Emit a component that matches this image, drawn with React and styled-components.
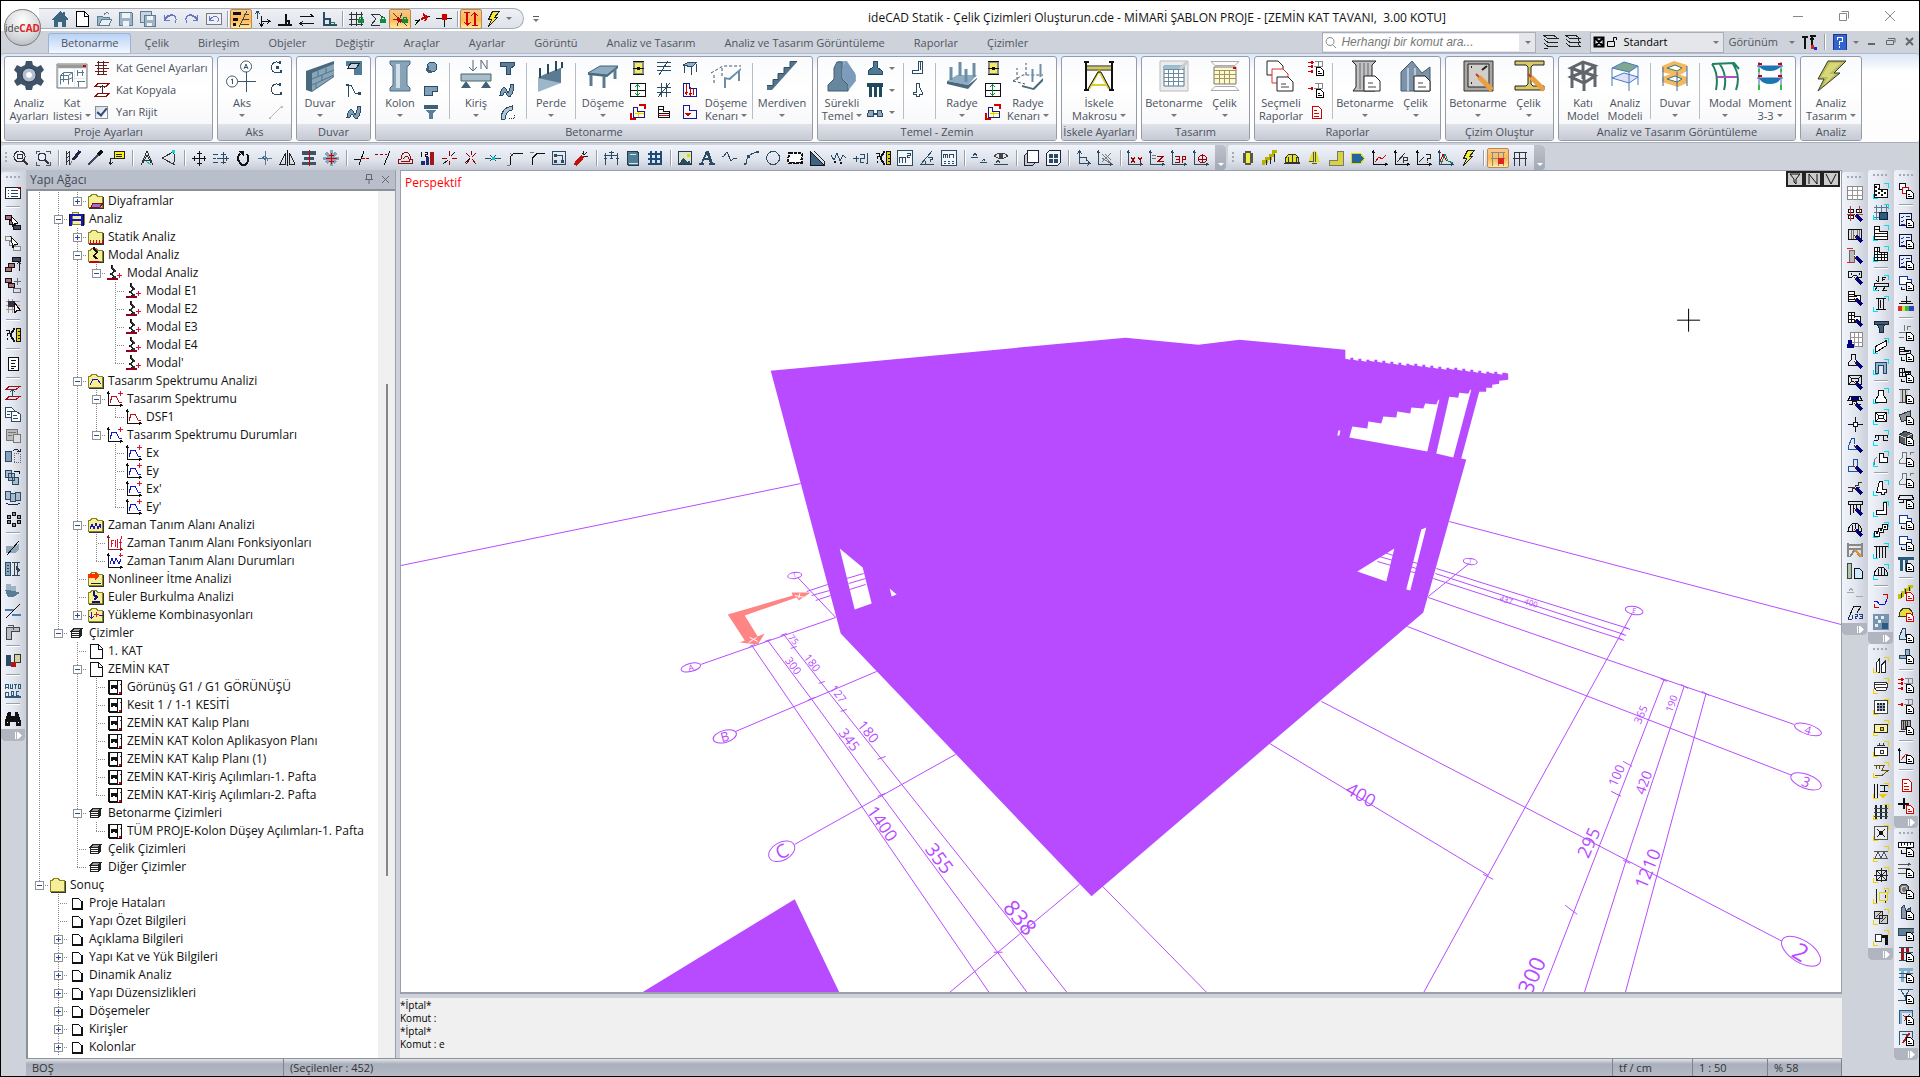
import React, { useState } from "react";
import styled, { createGlobalStyle, css } from "styled-components";

const GlobalStyle = createGlobalStyle`
  * { box-sizing: border-box; }
  body { margin: 0; background: #ced2db; overflow: hidden; }
  button, input, select { font: inherit; color: inherit; }
  button { border: 0; background: none; padding: 0; }
  ul { list-style: none; margin: 0; padding: 0; }
`;

/* ---------- icon drawings ---------- */

const NAVY = "#2b4a63";
const RED = "#d40000";
const GREEN = "#118a3a";
const PURPLE = "#b84bff";

const s = (d, c = "#111", w = 1) => ({ d, stroke: c, strokeWidth: w, fill: "none" });
const f = (d, c, st = "none") => ({ d, fill: c, stroke: st });

const doc = (c = "#000") => [f("M8.500 7.500h4l3 3v5h-7z", "#fff", c), s("M10 11.500h2M10 13.500h4", c)];
const brush = [s("M9 9l6 6", "#00007b", 3), s("M7 8l3 3", "#7b1010", 1), s("M7 7l2 2", "#fff", 1)];
const cyan = s("M11 .5h4.500v4M.5 11v4.500h4", "#00e0f0");
const gold = s("M11 .5h4.500v4M.5 11v4.500h4", "#f0d000", 1);
const axes = (c = "#111") => s("M1.500 1v13.500H15M0 3l1.500-2L3 3M13 13l2 1.500L13 16", c);
const folder = [f("M.5 3.500h2l1-2h5l1 2h5v11H.5z", "#f6ef9a", "#8a8420"), s("M15.500 4v11.500H1", "#333")];
const lock = [f("M10 8h6v4h-6z", GREEN), s("M11.500 8V6.500h3V8", GREEN)];
const gridD = "M3.500 1v14M8.500 1v14M13.500 1v14M1 3.500h14M1 8.500h14M1 13.500h14";
const slabD = "M1.500 1.500h5v5h8v8h-13z";

const icons = {
  home: [f("M0 8L8 0l3 3V1h2v4l3 3v1h-2v7h-4v-5H6v5H2V9H0z", "#3c6580")],
  page: [f("M2.500 .5h8l4 4v11h-12z", "#fff", "#000"), s("M10.500 1v4h4", "#000")],
  open: [f("M1 5h5l1 1h6v8H1z", "#9db4c4", "#5d7c92"), f("M3 14l3-6h10l-3 6z", "#e9eff4", "#5d7c92"), s("M8 4q2-4 5-1", "#5d7c92")],
  save: [f("M1.500 1.500h12l1 1v12h-13z", "#9fb3c4", "#5d7c92"), f("M4 2h8v5H4zM5 10h6v5H5z", "#edf3f7")],
  saveAll: [f("M.5 .5h11v11H.5z", "#c7d3dd", "#5d7c92"), f("M4.500 4.500h11v11h-11z", "#9fb3c4", "#5d7c92"), f("M7 5h6v4H7zM7 12h5v3H7z", "#edf3f7")],
  undo: [s("M2.500 4v5h5M3 8q3-5 8-4q5 3 2 8", "#6878c0", 1), s("M3 9q3-5 8-4", "#6878c0", 1)],
  redo: [s("M13.500 4v5h-5M13 8q-3-5-8-4q-5 3-2 8", "#6878c0", 1), s("M13 9q-3-5-8-4", "#6878c0", 1)],
  undoBox: [f("M.5 2.500h15v11H.5z", "#eef0f8", "#7a7a7a"), s("M3.500 5v4h4M4 9q3-5 7-3q3 2 0 5", "#6878c0", 1)],
  brick: [f("M0 1h8v3H0zM0 7h5v3H0zM0 12h3v3H0z", "#111"), s("M14 0L6 16M11 3.500h5M9 8.500h7M8 13.500h8", "#444")],
  move2: [s("M2.500 0v8M0 3l2.500-3L5 3", NAVY), s("M6.500 5v9M6 10.500h9M12 8l3 2.500-3 2M4 12l2.500 3L9 12", "#111")],
  perp: [s("M1 13.500h14M8.500 3v10M8 9.500h4v4", "#111", 2)],
  parallel: [s("M1 5.500h14M11 3l4 2.500M1 12.500h14M4 10l-3 2.500L4 15", "#111")],
  corner: [s("M2.500 1v13h13M2.500 8h6v6", NAVY, 2), s("M10 11h3v3", GREEN)],
  gridLock: [s(gridD, "#333"), ...lock],
  polyLock: [s("M1 3h7l5 3M1 14l5-6-5-5M1 14h9", "#333"), ...lock],
  starLock: [s("M1 2l14 13M1 8.500h13M5 15l5-13", "#444"), f("M5 6l3 2 1 4-4-2z", RED), ...lock],
  cutR: [s("M1 9.500h5M10 5.500h6M1 14l5-6", "#111", 1), s("M7 8l6-2M9 3l4 3-2 4", RED, 2)],
  tee: [s("M0 7.500h16M8.500 7v9", "#111"), f("M6 3h5v6H6z", RED)],
  updn: [s("M4.500 2v12M1 11l3.500 3L8 11M11.500 14V2M8 5l3.500-3L15 5M1 1.500h6M9 14.500h6", RED, 1), s("M3.500 2v12M12.500 2v12", RED)],
  bolt: [f("M7.500 .5h7l-5 6h3l-9 9 3-7h-3z", "#f4ee3a", "#222")],
  zoomBox: [s("M10.500 10.500L15 15", "#333", 2), f("M6.500 1a5.500 5.500 0 1 0 .1 0z", "#eef", "#333"), s("M4 4.500h5v4H4z", "#333")],
  zoomSel: [s("M1 4V1h4M11 1h4v3M15 12v3h-4M5 15H1v-3", "#555"), f("M7 3a4 4 0 1 0 .1 0z", "#e8effa", "#334"), s("M10 10l4 4", "#333", 2)],
  hatchPen: [s("M1.500 1v14M4.500 1v14M2 4l3-3M2 8l3-3M2 12l3-3", "#333"), s("M15 1L8 10", "#224", 3), s("M7 11l-2 4", "#777", 1)],
  pipette: [s("M12 4L3 13l-2 2", "#446", 2), s("M15 1l-4 4", "#111", 4)],
  note: [f("M5.500 1.500h10v7h-10z", "#ffee22", "#222"), s("M7 4.500h6M7 6.500h6M5 8.500H1.500V14M0 12l1.500 2L4 12", "#222")],
  compassA: [s("M2 15L8 1l6 14M4 10h8M8 5l4 8M8 5l-4 8", "#333"), s("M7 11l5 4", "#0cc")],
  arcCut: [s("M14 1L1 8l13 7M12 2q4 6 0 12", "#333"), f("M11 0h3v3h-3z", "#0dd")],
  move: [s("M8.500 1v14M1 8.500h14M6 3.500h5M6 13.500h5M3.500 6v5M13.500 6v5M8 2h1M8 15h1", "#111"), s("M8 2v13M2 8h13", "#111")],
  moveCopy: [s("M10.500 2v12M4 8.500h12M8 4.500h5M8 12.500h5M13.500 6v5", NAVY), s("M0 4.500h5M0 8.500h3M0 12.500h5", NAVY, 1)],
  rotate: [s("M5 4q-4 4 0 9t7 0 0-9", "#111", 2), f("M3 1h6v6z", "#111")],
  axisStar: [s("M8.500 1v14M1 8.500h14M6 6q5 0 5 5", "#5a7890"), f("M4 7l4 4 1-3z", "#369")],
  mirror: [s("M8.500 0v16", "#111"), s("M6.500 3v11H1zM10.500 3v11H16z", "#222")],
  alignC: [f("M1 1h14v4H1zM3 7h10v3H3zM1 12h14v3H1z", "#3b5468"), s("M8.500 0v16", RED, 1)],
  starMove: [s("M3 3l10 10M13 3L3 13", "#8aa2b5", 3), s("M8 0v16M0 8h16", "#8aa2b5", 3), s("M8.500 3v11M3 8.500h11M6 5.500h5M6 11.500h5", RED)],
  trimA: [s("M1 9.500h6M11 1L6 15", "#111"), s("M9 8.500h3M13 8.500h3", "#900", 1)],
  trimB: [s("M15 1L9 15", "#111"), s("M0 4.500h3M5 4.500h3M10 4.500h2", "#900", 1)],
  offset: [s("M1 13.500V9.500h3q0-7 5-7t4 7h2v4zM4 11.500h8V9q-2-5-6 0", "#8a1010")],
  steps12: [f("M2 11h4v4H2zM7 7h3v8H7z", "#1a2c7a"), f("M11 2h4v13h-4z", "#a01818"), s("M2.500 2v5M6 2.500h2v2H6v2h3", "#111")],
  breakA: [s("M8.500 1v5M8.500 11v4M1 8.500h5M11 8.500h5", "#900", 1), s("M2 14l5-4M10 6l4-4", "#111")],
  breakB: [s("M3 3l4 4M13 3L9 7M3 14l4-5M13 14L9 9M8.500 1v4", "#800"), s("M2 13l5-5", "#111")],
  extend: [s("M0 8.500h6M10 8.500h6M5 5l6 6M5 11l6-6", NAVY), f("M7 7h3v3H7z", "#0cc")],
  filletA: [s("M3.500 15V9q0-6 6-6H16", "#111"), s("M0 15h3M3 3l3 3", "#777")],
  filletB: [s("M3.500 15V8l5-5H16", "#111"), s("M1 2h4", "#777")],
  nodes: [s("M1.500 1.500h13v13h-13zM4 5.500h7v6", NAVY), f("M3 4h3v3H3zM10 10h3v3h-3zM3 10h3v3H3z", NAVY)],
  wand: [s("M2 15L10 6", "#c01010", 4), s("M10 1v4M15 6h-4M14 2l-3 3M9 3l2 2", "#222")],
  dimRow: [s("M1 5.500h14M2.500 3v12M8.500 1v8M14.500 3v12M1 8.500h3M7 8.500h3M13 8.500h3M6 2.500h5", NAVY)],
  book: [f("M2.500 1.500h9l2 1v13h-9l-2-1z", "#4f7f96", "#223c4d"), s("M5 4h6M4 13h9", "#d8e6ee")],
  grid: [s(gridD, "#1c4a7a", 2)],
  image: [f("M1.500 1.500h13v13h-13z", "#dfe6d0", "#223c4d"), f("M2 14l4-6 4 4 2-2 2 4z", NAVY), f("M10 4h3v3h-3z", "#dd0")],
  letterA: [f("M7 1h3l4 12h2v2h-6v-2h1l-1-3H5l-1 3h1v2H0v-2h2zM6 8h3L8 4z", NAVY)],
  poly: [s("M1 6h2l3-4 4 9 3-3h3", NAVY)],
  arc: [s("M3 14q0-10 11-12", NAVY), f("M1 13h2v2H1zM13 1h3v2h-3zM4 5h3v3H4z", NAVY)],
  circle: [s("M8 1.500a6.500 6.500 0 1 0 .1 0z", NAVY)],
  cloud: [f("M3 3h10q3 0 2 3t0 7q-2 1-4 0t-4 0-5 0q-2-1-1-4t1-6z", "#fff"), { ...s("M3 3h10q3 0 2 3t0 7q-2 1-4 0t-4 0-5 0q-2-1-1-4t1-6z", "#111", 2), strokeDasharray: "3 1" }],
  hatch: [f("M1 1l14 14H1z", "#3c6580", "#112"), s("M5 1l10 10v4", "#222")],
  spline: [s("M0 5l3 5 3-7 3 8 3-6 3 3", NAVY), f("M3 11h2v2H3zM9 12h2v2H9z", "#111")],
  plus21: [s("M0 8.500h6M3.500 6v6M7 4.500h4v4H7v4h4M14.500 3v10h-2", NAVY, 1)],
  qArrow: [s("M1 3.500h3v3H2.500V9M2.500 11v2", "#111"), s("M10 1L6 8l4 7M9 1L5 8l4 7", "#111"), f("M11.500 1.500h4v13h-4z", "#e8d000", "#111"), s("M13 4.500h2M13 8.500h2M13 11.500h2", "#111")],
  m2: [f("M.5 .5h15v15H.5z", "#f4f6fa", NAVY), s("M2.500 13V7.500h6V13M5.500 8v5M10 3.500h3v2h-3v2h3", NAVY)],
  angleQ: [s("M1 14.500h14M2 14L13 1M9 7.500h4v2h-2v2M7 14q0-4-3-4", NAVY)],
  mm2: [f("M.5 .5h15v15H.5z", "#f4f6fa", NAVY), s("M2.500 8V4.500h4V8M4.500 5v3M8.500 8V4.500h4V8M3 11.500h2M7 11.500h2M11 11.500h2M3 13.500h2M7 13.500h2M11 13.500h2", NAVY)],
  levels: [s("M0 7.500h7M9 12.500h7M2 6l2-3 2 3M11 11l2-2 1 2", NAVY)],
  eye: [s("M1 6q7-6 14 0q-7 5-14 0M1 14.500h14", "#444"), f("M6 4h4v4H6z", "#444"), s("M3 13l2-3 2 3", NAVY)],
  sheetA: [f("M4.500 .5h11v12h-11z", "#fff", "#223"), f("M1.500 5.500l3-3v10h8l-3 3h-8z", "#c5ccd5", "#223")],
  sheetB: [f("M1.500 3.500l3-3h11v12l-3 3h-11z", "#f2f5f9", "#223"), f("M4 4h4v4H4zM9 4h4v4H9zM4 9h4v4H4zM9 9h4v4H9z", NAVY)],
  ucs: [s("M4.500 13V1M2 4l2.500-3L7 4M4 13.500h11M12 10l3 3.500-3 2M4 7.500h7v3", NAVY)],
  ucsBrush: [axes(NAVY), s("M5 12l9-9M5 8l8 5M8 4l6 6M5 4l10 10", "#777")],
  xy: [axes(NAVY), s("M4 7l4 6M8 7l-4 6M11 7l2 3 2-3M13 10v3", "#900", 1)],
  zz: [axes(NAVY), s("M8 6.500h6l-5 5h6", "#900", 1), s("M3 5.500h4M3 8.500h4", "#777")],
  threeP: [axes(NAVY), s("M4 6.500h4v6H4M5 9.500h3M11.500 13V6.500h3v3h-3", "#900", 1)],
  target: [axes(NAVY), s("M9.500 5a4 4 0 1 0 .1 0M9.500 4v9M5 9.500h9", "#900", 1)],
  col3d: [f("M3 3h2V1h6v2h2v10h-2v2H5v-2H3z", "#55594a"), f("M6 3h4v10H6z", "#f2ee40")],
  stairY: [s("M1 15v-4h3V8h4V5h3V1h4", "#b8b000", 3), s("M4.500 15v-5M8.500 14V7M12.500 12V4", "#222")],
  domeY: [f("M1 12q0-8 7-8t7 8z", "#e5e030", "#333"), s("M4.500 12V7M8.500 12V4M12.500 12V7M0 13.500h16", "#333")],
  coneY: [f("M7 1h3l4 11h-5v3H7v-3H2z", "#e5e030"), s("M7.500 2v9H3M9.500 2v10M6 13.500h5", "#555")],
  wallY: [f("M9 1h6v14H1v-5h8z", "#d8d338", "#777")],
  tagY: [f("M1.500 3.500h9l4 5-4 5h-9z", "#24649c", "#e5d800")],
  curveR: [axes(), s("M3 12l4-5 3 2 4-4", "#c00")],
  curveP: [axes(), s("M3 12l8-9M9.500 13V7.500h4v3H9", "#333")],
  curveQ: [axes(), s("M3 12l5-5M10 4.500h4v4h-2.500v2M11.500 12v1", "#222")],
  peaks: [axes("#246"), s("M2 12l3-8 3 6 6 3", "#c00"), s("M3 14l4-10 3 7 5 2", "#186")],
  frameR: [s("M1 2.500h14M1 8.500h14M2.500 2v14M8.500 2v14M13.500 2v14", "#888"), f("M8 8h6v6H8z", "#d22")],
  frame: [s("M2 2.500h13M1 8.500h14M2.500 2v14M7.500 2v14M13.500 2v14", "#334")],
  layers: [s("M1 1.500h10l4 3H5zM1 5l4 3.500h10M1 9l4 3.500h10M1 15l4-1", "#222")],
  layers2: [s("M1 1.500h10l4 3H5zM1 5l4 3.500h10l-2-3M1 9l4 3.500h10l-2-3", "#222")],
  wrench: [s("M4 3v12M11 3v12", "#111", 2), s("M1 3h6M9 2h6M9 5h4", "#111", 2), f("M10 11h3v4h-3z", "#d22"), f("M13 13h3v3h-3z", "#22d")],
  help: [f("M2 0h13v16H2z", "#3264d0", "#1c3a88"), s("M6 5.500V3.500h5v4H8.500v3M8.500 12v2", "#fff", 1)],
  // left and right docks
  props: [f("M.5 2.500h15v11H.5z", "#fff", "#222"), s("M3 5.500h1M3 8.500h1M3 11.500h1M6 5.500h7M6 8.500h7M6 11.500h7", "#246"), f("M13 2h2v2h-2z", RED)],
  selA: [f("M.5 1.500h6v4h-6zM4.500 6.500h6v4h-6z", "#b07078", "#111"), f("M8.500 11.500h7v4h-7z", "#446", "#111"), f("M6 2l7 7-4 1-1 3z", "#fff", "#111")],
  selB: [f("M.5 1.500h6v4h-6zM4.500 6.500h6v4h-6zM8.500 11.500h7v4h-7z", "#eee", "#888"), f("M6 2l7 7-4 1-1 3z", "#fff", "#111")],
  selC: [f("M7.500 1.500h8v4h-8z", "#446", "#111"), f("M.5 11.500h6v4h-6zM3.500 7.500h6v4h-6z", "#b07078", "#111"), s("M14.500 6v9M12 8l2.500-2L16 8", "#222")],
  selD: [f("M.5 1.500h6v4h-6zM3.500 6.500h6v4h-6z", "#b07078", "#111"), s("M12.500 1v7M9 4.500h7M8 11.500h7v4H8z", "#667")],
  selE: [s("M1 3.500h14M1 7.500h14M1 11.500h14M3.500 1v14M7.500 1v14", "#b09090"), f("M3 3h7v6H3z", "#334"), f("M9 4l6 8h-3l-2 3z", "#fff", "#111")],
  list: [f("M3.500 1.500h10v13h-10z", "#fff", "#111"), s("M6 4.500h5M6 7.500h4M6 10.500h5M6 12.500h3", "#111")],
  heightR: [s("M4 1.500h11l-4 3H1zM4 11.500h11l-4 3H1z", "#a01010"), s("M7.500 5v7M5 7l2.500-2L10 7", NAVY)],
  copy: [f("M.5 1.500h6l3 3v7h-9z", "#fff", NAVY), f("M6.500 5.500h5l4 3v7h-9z", "#fff", NAVY), s("M8 9.500h4M8 12.500h5M2 5.500h4M2 8.500h3", NAVY)],
  paste: [f("M1.500 2.500h11v11h-11z", "#bbb", "#777"), f("M8.500 7.500h7v8h-7z", "#ddd", "#777"), s("M3 5.500h8M3 8.500h4", "#777")],
  copyA: [f("M.5 3.500h6v10h-6z", "#8aa0bc", NAVY), { ...s("M9 5.500h6v9H9z", "#667"), strokeDasharray: "1 1" }, s("M8 3q3-3 6 0M12 3.500h3V1", "#223")],
  copyB: [f("M.5 1.500h6v7h-6zM3.500 4.500h6v7h-6zM7.500 8.500h6v7h-6z", "#a9bace", NAVY), s("M9 2h5v3", "#111")],
  copyC: [f("M.5 1.500h5v8h-5zM5.500 3.500h5v8h-5zM10.500 2.500h5v8h-5z", "#a9bace", NAVY), s("M1 13q7 4 14 0", "#224")],
  ringC: [f("M7 1h3v3H7zM7 12h3v3H7zM2 4h3v3H2zM12 4h3v3h-3zM2 9h3v3H2zM12 9h3v3h-3z", "#889", "#111")],
  beamCut: [f("M1 6h10l3-3v6l-3 4H1z", "#8ea6b8"), s("M2 15L14 1", "#111")],
  colBar: [f("M.5 1.500h5v13h-5z", "#88a6bb", NAVY), s("M2 4.500h2M2 7.500h2M2 10.500h2M7 1.500h8M7 14.500h8M9.500 2v12M12.500 2v12", "#345"), f("M11 5l4 4-3 3z", "#345")],
  plane: [f("M0 8h8l7 3-7 4H3z", "#5a7d94"), f("M1 2h5v6H1zM6 4h5v5H6z", "#9db4c4")],
  beamLn: [s("M0 6.500h9M7 11.500h9", "#4d7fa8", 2), s("M1 15L15 1", "#111")],
  bracket: [f("M1.500 3.500h13v4h-8v8h-5z", "#b9bdc4", "#444"), s("M3 1h5v5", "#555")],
  render: [f("M1 2h5v11H1z", "#2b4a63"), f("M9 1h6v8H9z", "#d9d0a0", "#333"), f("M6 9h5v5H6z", "#b01818")],
  autoAbc: [s("M.5 7V2.500h3V7M1 5.500h2M5.500 2v4.500h2V2M9 2.500h3M10.500 2v5M13.500 2.500h2v4h-2zM.5 14v-3.500h3V14M6 9.500h2.500v4H6zM14 9.500h-3v4h3", "#2b5a7a"), s("M0 15h16", "#2b5a7a", 2)],
  binoc: [f("M3 1h3v4h4V1h3l3 9v5h-5v-4H5v4H0v-5z", "#111"), s("M2 11.500h1M13 11.500h1", "#fff")],
  table: [f("M.5 1.500h15v13H.5z", "#fff", "#888"), s("M1 5.500h15M1 10.500h15M5.500 2v13M10.500 2v13", "#999")],
  nodeB: [f("M1.500 3.500h5v3h-5zM9.500 3.500h5v3h-5zM1.500 9.500h5v3h-5z", "#fff", "#111"), s("M3.500 0v15M12.500 0v6M0 8.500h16", "#c33"), ...brush],
  panelB: [f("M1.500 2.500h13v10h-13z", "#ddd", "#111"), s("M4.500 3v9M6.500 3v9M10.500 3v9M12.500 3v9", "#777"), ...brush],
  colB: [f("M2 2h5v12H2z", "#bbb", "#666"), s("M0 .5h6M0 14.500h6", "#d22"), ...brush],
  shoulderB: [s("M1.500 2.500h13v6h-3l-2-2h-3l-2 2h-3zM4.500 4v2M12.500 4v2", "#111"), ...brush],
  slabB: [f("M1.500 1.500h6v4h6v6h-12z", "#fff", "#111"), s("M2 4.500h6M2 6.500h8M2 9.500h8", "#111"), ...brush],
  meshB: [f("M1.500 1.500h6v4h6v6h-12z", "#fff", "#111"), s("M4.500 2v9M7.500 4v7M2 4.500h6M2 8.500h8", "#111"), ...brush],
  tableF: [f("M3.500 .5h12v14h-12z", "#fff", "#888"), s("M4 5.500h12M4 10.500h12M7.500 1v14M11.500 1v14", "#999"), f("M1 8h4v4h2v4H0v-4h1z", "#000080")],
  footB: [s("M4.500 1.500h4v5l3 3v3h-10v-3l3-3z", "#111"), ...brush],
  padB: [s("M1.500 1.500h13v9h-13zM4.500 4.500h7v3h-7zM1 1l3 3M15 1l-3 3M1 11l3-3", "#111"), ...brush],
  capB: [s("M1.500 9.500h4v-3h4v3h4M3 1.500h10l2 4H1z", "#111"), f("M4 2h8v3H4z", "#000080"), ...brush],
  cross: [s("M8.500 1v15M1 8.500h15", "#111", 1), f("M6.500 6.500h4v4h-4z", "#fff", "#111")],
  wedgeB: [s("M4.500 1.500h3v8h4v3h-10v-3z", "#2050a0"), ...brush],
  boxB: [s("M6.500 1.500h4v12h-9v-5h5z", "#2050a0"), ...brush],
  stairB: [s("M1 12.500h4V9.500h3V6.500h3V3.500h4M1 8.500h12", "#333"), ...brush],
  pilesB: [s("M1 1.500h14v3H1zM3.500 5v10M6.500 5v8M9.500 5v4M13.500 5v8", "#111"), ...brush],
  domeB: [s("M1 10.500q1-8 7-8t7 8zM5.500 10V4M8.500 10V2M11.500 10V4", "#111"), ...brush],
  trussP: [s("M1 1v14M15 1v14M1 3h14M1 7h14M3 15L8 7l5 8", "#888", 2), s("M8 8l7 7", "#e09030", 2)],
  sheetG: [f("M.5 .5h4v15h-4z", "#a9c9a9", "#444"), f("M7.500 5.500h5l3 3v7h-8z", "#cfeaff", "#111")],
  levelG: [s("M0 8.500h7M9 12.500h7M2 7l2-3 2 3", "#aaa")],
  n123: [s("M1 14L7 1h7l-4 7", "#111"), s("M1 14.500h4M5.500 10v4M8 9.500h2v2H8v2h2M12 9.500h3v4h-3M13 11.500h2", "#223a8a")],
  checkC: [f(slabD, "#fff", "#111"), f("M2 3h2v2H2zM5 5h2v2H5zM2 7h2v2H2zM5 9h2v2H5zM8 7h2v2H8zM11 9h2v2h-2zM2 11h2v2H2zM8 11h2v2H8z", "#111"), cyan],
  gridCalc: [s(gridD, "#5a7a94"), f("M6 8h8v7H6z", "#2b5a84", "#123"), cyan],
  linesC: [f(slabD, "#fff", "#111"), s("M2 4.500h5M2 8.500h12M2 11.500h12", "#111"), cyan],
  meshC: [f(slabD, "#fff", "#111"), s("M4.500 2v12M8.500 7v8M11.500 7v8M2 5.500h5M2 8.500h12M2 11.500h12", "#111"), cyan],
  beamC: [s("M1 8.500h14v3H1zM4 12l-2 3h4M12 12l-2 3h4M5.500 1v6M3 5l2.500 2M9.500 6V2.500h3M9 4.500h3", "#111"), cyan],
  columnC: [s("M3 2.500h10M3 13.500h10M5.500 3v10M10.500 3v10M7.500 4v8", "#111"), cyan],
  funnelC: [f("M1 4h14v3H1zM4 7h8l-2 4v4H6v-4z", "#3f607a", "#223")],
  tiltC: [f("M2.500 8.500l11-6v5l-11 7z", "#fff", "#111"), cyan],
  portalC: [f("M2.500 3.500h11v11h-3v-8h-5v8h-3z", "#8fb4d0", "#246"), cyan],
  footC: [f("M5.500 2.500h5v5l3 4v3h-11v-3l3-4z", "#fff", "#111"), cyan],
  padC: [f("M2.500 3.500h11v9h-11z", "#fff", "#111"), s("M5.500 6.500h5v3h-5zM3 4l2 2M13 4l-2 2M3 12l2-2M13 12l-2-2", "#111"), cyan],
  capC: [s("M1 10.500h4l1-5h4l1 5h4M2 5.500h12M2 5v3M14 5v3", "#111"), cyan],
  cornC: [s("M1 13.500V9l3-3", "#777"), f("M6.500 2.500h4v4h4v5h-8z", "#fff", "#111"), cyan],
  wedgeC: [f("M6.500 1.500h3v8h4v3h-2v2h-3v-2h-5z", "#fff", "#111"), cyan],
  wallC: [f("M10.500 1.500h3v12h-10v-4h7z", "#fff", "#111"), cyan],
  stepsC: [f("M1.500 9.500h4v-3h4v-4h5v5h-4v3h-4v4h-5z", "#fff", "#111"), f("M3 10h2v2H3zM7 7h2v2H7zM11 4h2v2h-2z", "#111"), cyan],
  pilesC: [s("M1 3.500h14M3.500 3v12M6.500 3v12M9.500 3v12M12.500 3v12", "#111", 1), cyan],
  domeC: [s("M1 11.500q1-8 7-8t7 8zM5.500 11V5M8.500 11V3M11.500 11V5", "#111"), cyan],
  redPoly: [s("M1 8h3l2 3h6l2-5", "#1010d0"), s("M10 1.500h4.500v4M1.500 11v3.500h4", RED)],
  tileC: [f("M0 0h16v16H0z", "#7893ad"), f("M2 2h3v3H2zM8 2h3v3H8zM5 6h3v3H5zM2 10h3v3H2z", "#e5edf3"), f("M9 9h6v6H9z", "#2b5a84")],
  multiDoc: [f("M1.500 .5h6v6h-6z", "#fff", "#111"), f("M4.500 4.500h6v6h-6z", "#fff", "#d00"), ...doc()],
  checkDoc: [f("M1.500 1.500h12v12h-12z", "#e6ecfa", "#113"), s("M3 5l1 1 2-2M3 9l1 1 2-2M8 4.500h4M8 7.500h3M3 12.500h4", "#13a"), ...doc()],
  blueDoc: [f("M1.500 1.500h8v3h4v5h-12z", "#fff", "#113a9a"), s("M3.500 12v2.500h3", "#111"), ...doc()],
  rainbow: [s("M8.500 0v7M1 7.500h14M3 5.500h10", "#111"), f("M0 10h4v5H0z", "#c33"), f("M4 10h3v5H4z", "#dd3"), f("M7 10h4v5H7z", "#3b4"), f("M11 10h5v5h-5z", "#34b")],
  beamDoc: [s("M1 7.500h9M6.500 0v6M9.500 5V1.500h3M1 12.500h5", "#777"), ...doc()],
  linesDoc: [s("M1.500 1.500h5v3h6v4h-11zM2 3.500h5M2 5.500h9M3.500 11v3.500h3", "#111"), ...doc()],
  meshDoc: [s("M1.500 1.500h5v3h6v5h-11zM4.500 2v7M7.500 5v4M10.500 5v3M2 5.500h10M3.500 12v2.500h3", "#111"), ...doc()],
  colDoc: [f("M2 1h8v13H2z", "#ccc"), s("M1 1.500h11M1 14.500h7M4.500 2v12M7.500 2v12", "#444"), ...doc()],
  tubeDoc: [f("M1 6l11-4v7l-8 4z", "#8d949b", "#333"), ...doc()],
  boxDoc: [f("M1 5l6-4 7 3v7l-7 4-6-3z", "#555c60", "#222"), s("M1 5l6 3 7-4M7 8v6", "#ccc"), ...doc()],
  footDoc: [s("M4.500 1.500h4v5l3 3v3h-10v-3l3-3zM12.500 4V1.500h3", "#777"), ...doc()],
  capDoc: [s("M1 9.500h4l1-3h4l1 3M2 2.500h12l2 4H0z", "#111"), ...doc()],
  pilesDoc: [f("M0 1h16v3H0zM2 4h3v11H2zM7 4h3v11H7z", "#2b5a78"), ...doc()],
  stairDocR: [s("M1 14v-4h3V7h3V4h4V1h4", "#c8c000", 3), s("M3.500 13V8M7.500 9V4M11.500 6V2", "#222"), ...doc("#d00")],
  domeDocR: [f("M1 10q1-8 7-8t7 8z", "#e5e030", "#333"), ...doc("#d00")],
  wedgeDoc: [f("M4.500 1.500h3v8h4v3h-10v-3z", "#cfe0ee", NAVY), ...doc()],
  wallDoc: [f("M7.500 1.500h4v9h-10v-3h6z", "#8fb4d0", NAVY), ...doc()],
  redDocA: [s("M6.500 1.500h8v5M6 6.500h8M10.500 1v6", "#888"), s("M0 2.500h5M0 6.500h5M0 11.500h5M3 1l2 1.500L3 4", RED, 1), f("M3 1h2v3H3zM3 5h2v3H3zM3 10h2v3H3z", RED), ...doc()],
  redDocB: [s("M6.500 1.500h8v5M6 6.500h8M10.500 1v6", "#888"), s("M0 6.500h5", RED, 1), f("M3 5h2v3H3z", RED), ...doc()],
  barsDoc: [f("M3.500 1.500h9v9h-9z", "#aaa", "#333"), s("M5.500 2v8M7.500 2v8M9.500 2v8M1 12.500h6", "#333"), ...doc()],
  axesDoc: [axes(), s("M3 12l5-6 3 2", "#c33"), ...doc()],
  redDoc: [f("M4.500 2.500h6l3 3v9h-9z", "#fff", RED), s("M6 6.500h3M6 9.500h5M6 12.500h5", RED)],
  crossDoc: [s("M5.500 0v11M0 5.500h11", "#111", 2), ...doc("#d00")],
  rulerDoc: [f("M.5 1.500h15v5H.5z", "#fff", "#111"), s("M3.500 2v3M6.500 2v2M9.500 2v3M12.500 2v2M3.500 9v3.500h4", "#111"), ...doc()],
  arrowsDoc: [s("M0 2.500h12M10 1l2 1.500L10 4M0 6.500h12M0 11.500h8", "#555"), ...doc()],
  discDoc: [f("M6 1a5 5 0 1 0 .1 0z", "#777", "#333"), s("M6 3.500a3 3 0 1 0 .1 0", "#ccc"), ...doc()],
  bladeDoc: [f("M3 14V5l3-4 2 6 4-3v10z", "#8d99a8", NAVY), ...doc()],
  bandDoc: [f("M0 3h16v4l-4 3H0z", "#5f7f95", "#345"), ...doc()],
  redColsDoc: [f("M3 1h3v14H3zM8 1h3v14H8z", "#a01818"), s("M1 1.500h14M1 14.500h14M1 6.500h14", "#2b4a63"), ...doc()],
  blueColsDoc: [f("M1 1h14v3H1zM3 4h3v11H3zM9 4h3v11H9z", "#7fb0d0"), s("M1 6.500h14M1 10.500h10", "#456"), ...doc()],
  vDoc: [s("M0 1.500h15M3 2l4 7 4-7M7.500 9v4M0 12.500h7", "#2b5a78"), ...doc()],
  gateDocA: [f("M1 1h14v3H4v11H1z", "#8fb8d8"), s("M1.500 15V1.500h13V8", "#2b5a78"), s("M5 6l5 4M12 5l-6 7", "#b01818"), ...doc()],
  gateDocB: [s("M1.500 15V1.500h13V8M4 4.500h8", "#2b5a78"), s("M11 3L5 13", "#b01818", 2), ...doc()],
  bladeG: [f("M3.500 15V6l3-4v13zM8.500 15V8l4-4v11z", "#fff", "#222"), gold],
  beamG: [f("M1 4h12l2 3-2 5H3l-2-3z", "#fff", "#333"), s("M1 6.500h12M3 9.500h10", "#333"), gold],
  plateG: [f("M1.500 1.500h13v13h-13z", "#fff", "#444"), f("M4 4h8v8H4z", "#223"), s("M6.500 4v8M9.500 4v8M4 6.500h8M4 9.500h8", "#9ab"), gold],
  boltG: [f("M1.500 4.500h13v8h-13z", "#fbf3a0", "#222"), f("M7 7h3v3H7z", "#e8d000", "#333"), gold],
  boltG2: [f("M1.500 6.500h13v8h-13z", "#fff", "#222"), s("M4 4.500h8M6.500 2v3M10.500 2v3M7 9.500h3v3H7z", "#333"), gold],
  weldG: [s("M1 3.500h10l-2 5h6l-6 5H2M3.500 3v4M6.500 3v4", "#6b4a10"), gold],
  ibG: [s("M1.500 1v14M4.500 1v14M7 2.500h8M7 8.500h8M11.500 3v5", "#111"), f("M5 11h10l-5 4z", "#e8d000"), gold],
  meshG: [s("M3 1v14M8 1v14M13 1v14", "#1a2a20", 2), s("M1 4.500h14M1 8.500h14M1 12.500h14", "#445"), gold],
  padG: [f("M1.500 1.500h13v13h-13z", "#eee", "#555"), s("M4 4l8 8M12 4l-8 8", "#111"), f("M6 6h4v4H6z", "#111"), gold],
  trussG: [s("M1 5.500h14M1 12.500h14M2 12l3-6 3 6 3-6 3 6", "#555"), gold],
  starG: [s("M1 8.500h14M8.500 1v14M3 3l11 11M14 3L3 14M3.500 3.500h10v10h-10z", "#222"), gold],
  lineG: [s("M3.500 1v14M12.500 2v3M12.500 7v3M12.500 12v3", "#222"), s("M6.500 4.500h8v8h-8z", "#e8d000"), gold],
  hatG: [f("M1.500 2.500h8v7h-8zM6.500 6.500h8v8h-8z", "#ccc", "#222"), s("M3 8l5-5M8 13l5-5", "#333"), gold],
  hammerG: [f("M2.500 4.500h6v7h-6z", "#fff", "#333"), f("M9 5h6v10h-3V8H9z", "#111"), gold],
  // tree
  folder: [...folder],
  folderD: [...folder, f("M5 10h10l-3 4H3z", "#7a7ae8", "#a00")],
  frameF: [f("M3 1h6l1 2h5v10H3z", "#f6ef9a", "#8a8420"), s("M2 15V4h11v11M2 9h11", "#1414c8", 2), s("M.5 15V3M14.500 15V3", "#111")],
  folderS: [...folder, s("M2.500 15v-4M5.500 15v-4M8.500 15v-4M11.500 15v-4M14.500 15v-4", "#c01010"), s("M1 14.500h14", "#c01010")],
  folderM: [...folder, s("M5 0v2l4 3-4 4 4 3", "#111"), s("M6 0v2l4 3-4 4 4 3", "#111"), s("M2 15h9", "#c00020", 2)],
  modal: [s("M4.500 0v3l3 3-4 3 4 3-4 2", "#111"), s("M5.500 0v3l3 3-4 3 4 3-4 2", "#333"), s("M0 14h11", "#900020", 2), s("M12.500 8v5M10 10.500h5", "#e01030")],
  folderT: [...folder, s("M2 12l3-6h4l4 5", "#1414c8")],
  spRed: [axes(), s("M3 12l2-7h4l3 6h3", "#c01020"), s("M13.500 0v5M11 2.500h5", "#e01030")],
  spDsf: [axes(), s("M3 12l2-7h4l3 6h3", "#c01020")],
  spBlue: [axes(), s("M3 12l2-7h4l3 6h3", "#1414c8"), s("M13.500 0v5M11 2.500h5", "#e01030")],
  folderZ: [...folder, s("M2 12l2-5 2 5 2-6 2 6 2-5 1 4", "#1414c8")],
  zRed: [axes("#822"), s("M4.500 12V5.500h2M4 8.500h2M8.500 5v7M10.500 4v9M13.500 4v9M12 7.500h3M14.500 1v3", "#e01030")],
  zBlue: [axes(), s("M3 11l2-6 2 6 2-6 3 6 2-5", "#1414c8"), s("M13.500 0v4M12 2.500h4", "#e01030")],
  folderN: [...folder, f("M0 3h7V1l5 4-5 4V7H0z", "#ff3000"), s("M3 12.500h10", "#222")],
  folderE: [...folder, s("M6 2v4l3 2-3 3M4 12.500h8", "#101080", 2)],
  folderY: [...folder, s("M3.500 5v5M1 9l2.500 2L6 9M11 8.500h4", "#1414c8"), s("M8.500 5v5M6 7.500h5", "#e01030")],
  stack: [f("M5 3.500h8l-3 3H2z", "#999", "#222"), s("M2 8.500h8l3-3M2 10.500h8l3-3M2 12.500h8l3-3M2.500 6v6", "#222")],
  sheet: [f("M2.500 1.500h8l4 4v10h-12z", "#fff", "#111"), s("M10.500 2v4h4", "#111")],
  small: [f("M3.500 3.500h6l3 3v7h-9z", "#fff", "#111"), s("M3 14.500h10.500V6", "#111")],
  draw: [f("M2 1h12v14H2z", "#fff", "#111"), s("M2.500 1v14M1.500 1v14M10.500 1v14", "#111"), s("M3 1.500h11M3 14.500h8", "#111"), f("M4 6h6v4H8V9H6v1H4z", "#111"), f("M12 13h2v2h-2zM13 5h1v1h-1z", RED)],
  // small ribbon icons
  floors: [s("M3 2.500h12M1 5.500h12M3 8.500h12M1 11.500h12M3 14.500h10", "#8a1010"), s("M4.500 1v14M9.500 1v14", "#333")],
  floorCopy: [s("M4 1.500h11l-3 3H1zM4 11.500h11l-3 3H1z", "#8a1010"), s("M8.500 4v7M6 6l2.500-2L11 6", "#333")],
  arcDot: [s("M12 3a5.500 5.500 0 1 0 1 8", NAVY), f("M8 6h3v3H8z", NAVY), f("M11 1h2v3h-2zM12 10h2v3h-2z", NAVY)],
  arcC: [s("M12 3a5.500 5.500 0 1 0 1 8", NAVY), f("M11 1h2v3h-2zM12 10h2v3h-2z", NAVY)],
  dotLine: [s("M2 14L14 2", "#bbb"), f("M1 13h2v2H1zM13 2h2v2h-2z", "#bbb")],
  wallV: [f("M0 1h16v14H8V8L0 6z", "#4f7f96"), f("M5 3h9l-4 5H2z", "#c3d5e2", "#223")],
  zig: [s("M2.500 15V3M0 3h5l4 8h6", NAVY, 1), f("M0 2h3v2H0zM12 10h3v3h-3z", NAVY)],
  wave: [f("M2 9q3-7 6 0 1 5 3-3V2h3v7q-2 8-6 4-2-6-4 0H1z", "#7fa0b8", NAVY)],
  cyl: [f("M9 2a5 5 0 1 0 .1 0z", "#7fa0b8", NAVY), f("M6 5L3 8q0 5 5 5l2-2q-5 0-4-6z", "#3f6078")],
  ell: [f("M1.500 4.500h13v5h-5v4h-8z", "#7fa0b8", NAVY)],
  funnel: [f("M1 1h14v4H1z", "#3f607a"), f("M3 6h10l-3 4v5H6v-5z", "#5c7f98")],
  tBeam: [f("M1 2h14v4l-4 3v5H7V6H1z", "#5c7f98", NAVY)],
  quarter: [f("M2 15q0-11 11-13v4q-6 1-7 9z", "#b3c6d6", NAVY), { ...s("M10 14.500h5.500v-5", "#333"), strokeDasharray: "1 1" }],
  slabCol: [f("M3 1h11v14H3z", "#8a8a84"), f("M5 3h7v10H5z", "#f2ee60"), s("M3 8.500h11M3 1.500h11M3 14.500h11", "#111", 1), f("M7 7h3v3H7z", "#111")],
  slabIn: [s("M.5 1.500h15v13H.5zM1 8.500h14", "#111"), s("M7.500 3v10M5 5l2.500-2L10 5M5 11l2.500 2 2.500-2", GREEN)],
  slabL: [f("M3.500 3.500h4v4h7v6h-11z", "#ffffc0", "#1414a8"), s("M9 1h6v4M1 9v6h5", RED, 2), s("M5 9.500h9M8.500 8v5", "#e8d000")],
  hatchA: [s("M1 2.500h14M1 6.500h14M1 10.500h14M12 1L3 15", NAVY)],
  hatchB: [s("M1 5.500h14M1 10.500h14M5.500 1v14M10.500 1v14M14 1L2 15", NAVY)],
  slabBlk: [s("M2.500 2.500h5v5h6v6h-11zM2 5.500h5M2 9.500h12", "#111"), s("M3 11.500h10", RED)],
  tableS: [f("M1 5l6-3h8l-5 5z", "#8fb0c8", NAVY), s("M2.500 6v7M9.500 7v8M14.500 4v8", NAVY)],
  loadR: [s("M1.500 1.500h6v5h7v8h-13z", "#1414a8"), s("M4.500 2v10M8.500 5v8M11.500 7v6M3 10l1.500 2L6 10M7 11l1.500 2 1.500-2", RED, 1)],
  slabR: [s("M1.500 1.500h6v5h7v8h-13z", "#1414a8"), f("M3 9h6l-3 4z", RED)],
  foot: [f("M6 1h4v6l5 4v3H1v-3l5-4z", "#4f7a96", NAVY)],
  piles: [f("M0 1h16v4H0zM2 5h3v10H2zM7 5h3v10H7zM12 5h3v10h-3z", "#1f4a5c")],
  pads: [f("M0 12l2-6h4v3h4V6h4l2 6h-6v-2H6v2z", "#8fa6c0", NAVY)],
  lWall: [f("M8.500 1.500h4v12h-10v-3h6z", "#fff", NAVY), s("M10 2v8", NAVY)],
  wedge: [f("M6.500 1.500h3v4l3 5v2h-3v2h-3v-2h-3v-2h3z", "#fff", NAVY)],
};

const bigs = {
  gear: [f("M13 1h6l1 4 4 2 4-2 3 5-3 3v5l3 3-3 5-4-2-4 2-1 4h-6l-1-4-4-2-4 2-3-5 3-3v-5L1 10l3-5 4 2 4-2z", "#3f5368"), f("M16 8a7 7 0 1 0 .1 0z", "#b4c0d0", "#26384a"), f("M16 12a3 3 0 1 0 .1 0z", "#fff")],
  floorList: [f("M1 4h30v24H1z", "#e8e8ea", "#777"), f("M2 5h28v3H2z", "#999"), f("M27 5h3v2h-3z", RED), f("M3 9h15v18H3zM19 9h11v9H19zM19 19h11v8H19z", "#fff"), s("M4.500 15.500l3-3h9v6M4.500 15.500h8l4-3M4.500 15.500v9M12.500 15.500v9M4.500 19.500h8l4-2M7.500 13v9M16.500 18v4M21 12.500h7M21.500 10v6M26.500 10v6M21 21.500h8M22.500 22v5", "#56788c")],
  axisBig: [s("M20.500 12v20M12 21.500h18", "#3c5568", 1), f("M20 1a5.500 5.500 0 1 0 .1 0z", "#fff", "#3c5568"), f("M6 16a5.500 5.500 0 1 0 .1 0z", "#fff", "#3c5568"), s("M18 9l2-5 2 5M18.500 7.500h3M5 20l1.500-1v5", "#3c5568")],
  wallBig: [f("M2 11L30 1v16L8 32l-6-2z", "#49697e"), f("M8 13L30 4v12L8 31z", "#89a5b8"), s("M8 19l22-9M8 25l22-10M14 11v5M22 8v5M18 15v6M12 23v5", "#54748a")],
  columnBig: [f("M6 1h20v3l-3 3v18l3 3v3H6v-3l3-3V7L6 4z", "#87a3b8", "#4c6c84"), f("M12 4h4v24h-4z", "#d3e0ea")],
  beamBig: [f("M1 14h30v7H1z", "#a9bcc9", "#466"), f("M6 21l5 7H1zM26 21l5 7H21z", "#3f617a"), s("M13 0v11M9 7l4 4 4-4M21 9V0l6 9V0", "#567")],
  perdeBig: [f("M3 18L26 8v15L3 32z", "#9cb6ca"), f("M3 18l5-3 20-8-2 2v14", "#5a7b92"), s("M5 18V8M13 14V4M21 11V1M27 8V2", "#28485e", 2)],
  tableBig: [f("M1 13L13 6h18L20 15z", "#8fadc2", "#3f617a"), f("M1 13l19 2v2L1 15zM31 6v2l-11 9v-2z", "#49697e"), s("M4 15v11M17 16v12M28 9v10", "#5b7b92", 3)],
  edgeBig: [{ ...s("M1 13L13 6h18M4 15v9M12 8v8", "#456"), strokeDasharray: "3 2" }, f("M14 17l5 1 12-10v2l-11 10-6-1z", "#6d8ea6"), s("M15 18v10M29 11v10", "#6d8ea6", 2)],
  stairBig: [f("M1 30h5l25-28h-7v5h-6v6h-6v6H7v6H1z", "#55748a"), s("M1 25.500h6v-6h5v-6h6v-6h6v-6h7", "#2f4f66")],
  footBig: [f("M12 1h9l9 14v6l-8 10H3v-6l7-7z", "#8fadc2"), f("M2 31v-6l6-6V8l3-6h5v17l6 6v6z", "#66879d", "#3f5f78"), f("M20 1l9 12v8l-7 8v-5l-6-6V9z", "#7d9bbb")],
  radyeBig: [f("M1 21l10-6h20l-9 10z", "#8fadc2"), f("M1 21l21 4v4L1 24zM31 19v-1l-9 7v4z", "#49697e"), s("M5 20V7M14 16V2M20 22V9M28 17V3", "#6d8ea6", 3)],
  radyeEdge: [{ ...s("M1 21l10-6h20M5 20V8M14 15V3M1 21l12 3", "#456", 1), strokeDasharray: "3 2" }, f("M10 25l11 3 10-10v3l-9 9-12-3z", "#49697e"), s("M20.500 22V9M28.500 17V4", "#6d8ea6", 2)],
  scaffold: [s("M3 2v28M29 2v28M1 2h5M26 2h5M1 30h5M26 30h5", "#111", 2), s("M4 6h24M4 10h24", "#111"), s("M4 8h24M6 29L16 11l10 18M8 25h16", "#d8cc30", 2), s("M5 29L15 12l3 0 9 17", "#111")],
  calcA: [f("M2 1h28v30H2z", "#ececee", "#bbb"), f("M6 6h20v20H6z", "#fff", "#4d7a92"), f("M6 6h20v3H6z", "#9fc0d4"), s("M6 9.500h20M6 13.500h20M6 17.500h20M6 21.500h20M10.500 10v16M15.500 10v16M20.500 10v16", "#6b8ca0"), s("M22 9l7-7", "#ccc", 3)],
  calcB: [s("M2 1.500h28l-4 4H6zM2 30.500h28l-4-4H6z", "#aaa"), f("M5 7h22v17H5z", "#fff8d0", "#777"), s("M5 10.500h22M5 14.500h22M5 18.500h22M10.500 10v14M15.500 10v14M20.500 10v14", "#a09860"), f("M24 7h3v2h-3z", RED)],
  reports: [f("M2 1h11l5 5v9H2z", "#fff", "#222"), f("M7 9h11l5 5v9H7z", "#fff", "#e03030"), f("M12 17h11l5 5v9H12z", "#fff", "#222"), s("M16 24h5M16 27h8", "#444")],
  colReport: [f("M3 1h24l-4 4v22l3 4H4l3-4V5z", "#c2c2c6", "#222"), s("M11 3v26M15 3v26M19 3v26", "#666"), f("M15 16h11l5 5v10H15z", "#fff", "#222"), s("M19 23h5M19 27h8", "#444")],
  steelReport: [f("M1 12L12 1l10 12 8-6v24H1z", "#7d93aa", "#44586c"), s("M8 8v23M15 8v23", "#b9c8d6", 2), f("M14 16h11l5 5v10H14z", "#fff", "#222"), s("M18 23h5M18 27h8", "#444")],
  drawA: [f("M2 1h29v30H2z", "#aaa6a4", "#333"), f("M6 4h21v23H6z", "#d2cecc", "#222"), s("M20 10l5-4M9 7h1M9 23h1", "#222", 2), s("M17 17l13 13", "#e8a040", 5), s("M14 14l3 3", "#c04020", 2)],
  drawB: [f("M2 1h29v4H20l-2 2v17l2 2h11v4H2v-4h11l2-2V7l-2-2H2z", "#d8c868", "#222"), s("M18 17l13 13", "#e8a040", 5), s("M15 14l3 3", "#c04020", 2)],
  solid: [s("M4 8l12-6 12 4-11 7zM4 17l12-5 12 4-11 7zM5 8v20M17 12v19M28 6v21M16 3v16", "#62666c", 3)],
  model: [f("M3 8l12-6 14 4-9 6z", "#7fa890"), f("M3 18l12-5 14 4-9 6z", "#dfe4fa"), s("M3 8l12-6 14 4-9 6zM3 18l12-5 14 4-9 6zM3 8v18M20 12v19M29 6v19", "#4a78c0", 1)],
  duvarM: [f("M3 6l12-5 13 4v6l-9 5L3 12zM3 17l12-4 13 4v6l-9 4-16-5z", "#f4b860"), f("M8 8l8-3 7 3-5 3zM8 19l8-3 7 3-5 3z", "#fff", "#3a7a6a"), s("M4 7v19M18 12v19M28 6v20", "#3a6aa0")],
  modalM: [s("M3 4l22-1 5 6M3 4q7 10 4 26M10 3q9 12 5 27M24 4q8 12 3 26", "#208060", 2), s("M8 17h20", "#b050c0", 2)],
  moment: [f("M5 6h22q-3 5-11 5T5 6zM5 18h22q-3 6-11 6T5 18z", "#1878b0"), s("M5 2v28M27 2v28M3 6h26M3 18h26", "#3a62b8", 1), s("M4 4h4M24 4h4M4 16h4M24 16h4", RED, 2), s("M5 9v3M27 9v3M5 25v5M27 25v5", "#30c040", 2)],
  boltBig: [f("M13 1h18L19 13h6L3 31l6-12H3z", "#b8bc60", "#3a3c20"), f("M15 3h11L14 14h6L8 26l5-9H6z", "#d8d878")],
};

const Glyph = ({ name, big }) => {
  const size = big ? 32 : 16;
  return (
    <svg
      width={size}
      height={size}
      viewBox={`0 0 ${size} ${size}`}
      shapeRendering={big ? "auto" : "crispEdges"}
      aria-hidden="true"
    >
      {(big ? bigs : icons)[name].map((p, i) => (
        <path key={i} {...p} />
      ))}
    </svg>
  );
};

/* ---------- shared bits ---------- */

const Window = styled.div`
  display: flex;
  flex-direction: column;
  height: 100vh;
  border: 1px solid #000;
  background: #ced2db;
  color: #111;
  font: 12px/16px "Open Sans", "Noto Sans", sans-serif;
`;

const IconButton = styled.button`
  display: flex;
  flex: none;
  align-items: center;
  justify-content: center;
  width: 22px;
  height: ${(p) => p.$h || 20}px;
  ${(p) =>
    p.$on &&
    css`
      background: linear-gradient(#f8c88c, #fdb851 55%, #ffe9a8);
      border: 1px solid #b98a4a;
      border-radius: 2px;
    `}
`;

const Sep = styled.span`
  flex: none;
  width: 1px;
  height: 16px;
  margin: 0 3px 0 4px;
  background: #9aa0ab;
  box-shadow: 1px 0 #fff;
`;

const Arrow = styled.span`
  flex: none;
  width: 0;
  height: 0;
  margin: 0 ${(p) => p.$gap || 0}px;
  border: 3px solid transparent;
  border-top: 3px solid #777;
  border-bottom: 0;
`;

const renderIcons = (list, active = []) =>
  list.split(" ").map((name, i) =>
    name === "|" ? (
      <Sep key={i} />
    ) : (
      <IconButton key={i} type="button" aria-label={name} $on={active.includes(name)}>
        <Glyph name={name} />
      </IconButton>
    )
  );

/* ---------- title bar ---------- */

const TitleBar = styled.header`
  position: relative;
  display: flex;
  flex: none;
  align-items: center;
  height: 30px;
  padding: 0 6px 0 38px;
  background: #fff;
`;

const Logo = styled.div`
  position: absolute;
  z-index: 2;
  top: 8px;
  left: 3px;
  display: flex;
  align-items: center;
  justify-content: center;
  width: 37px;
  height: 37px;
  border: 1px solid #777;
  border-radius: 50%;
  background: radial-gradient(circle at 50% 30%, #fff, #d4d6da 60%, #a8abb0);
  color: #444;
  font-size: 10px;
  b {
    color: #e02020;
  }
`;

const QuickBar = styled.div`
  display: flex;
  align-items: center;
  height: 21px;
  margin-top: 5px;
  padding: 0 9px 0 10px;
  border: 1px solid #a6abb5;
  border-left: 0;
  border-radius: 0 11px 11px 0;
  background: linear-gradient(#eff1f5, #dde1e9);
  ${Sep} {
    margin: 0 2px;
  }
`;

const QuickMore = styled.span`
  margin: 5px 0 0 9px;
  padding-top: 2px;
  border-top: 1px solid #555;
`;

const Title = styled.h1`
  flex: 1;
  margin: 0;
  padding-top: 4px;
  font-size: 12px;
  font-weight: 400;
  text-align: center;
  white-space: pre;
`;

const WinButton = styled.button`
  width: 46px;
  height: 28px;
  svg {
    display: block;
    margin: auto;
  }
`;

/* ---------- tabs ---------- */

const TabRow = styled.nav`
  display: flex;
  flex: none;
  align-items: center;
  height: 22px;
  padding-left: 47px;
  color: #50555f;
`;

const Tab = styled.button`
  align-self: flex-end;
  height: 20px;
  padding: 0 14px 2px 13px;
  border: 1px solid transparent;
  border-bottom: 0;
  border-radius: 3px 3px 0 0;
  font-size: 11px;
  white-space: nowrap;
  ${(p) =>
    p.$on &&
    css`
      padding: 0 11px 2px 12px;
      border-color: #9db4d4;
      background: linear-gradient(#b9d2f6, #f2f7ff);
    `}
`;

const Spacer = styled.span`
  flex: 1;
`;

const SearchBox = styled.label`
  display: flex;
  align-items: center;
  width: 214px;
  height: 21px;
  margin-right: 4px;
  padding-right: 4px;
  border: 1px solid #a9aeb8;
  background: #e4e6ea;
  input {
    flex: 1;
    min-width: 0;
    height: 17px;
    margin: 0 6px 0 0;
    padding: 0 0 0 4px;
    border: 0;
    background: #fff;
    font: italic 12px/16px "Liberation Sans", sans-serif;
  }
  input::placeholder {
    color: #777;
  }
  svg {
    width: 14px;
    height: 17px;
    background: #fff;
  }
`;

const StyleBox = styled.label`
  display: flex;
  align-items: center;
  width: 134px;
  height: 21px;
  margin-left: 6px;
  padding: 0 4px 0 2px;
  gap: 2px;
  border: 1px solid #a9aeb8;
  background: #e4e6ea;
  color: #000;
  select {
    flex: 1;
    min-width: 0;
    padding: 0 2px;
    border: 0;
    appearance: none;
    background: none;
    font-size: 11px;
  }
`;

const RowText = styled.button`
  margin: 0 8px 0 4px;
  font-size: 11px;
`;

const MdiButton = styled.button`
  width: 19px;
  color: #555;
`;

/* ---------- ribbon ---------- */

const Ribbon = styled.section`
  display: flex;
  flex: none;
  gap: 4px;
  height: 90px;
  padding: 2px 3px;
  border-top: 1px solid #b3bac8;
  border-bottom: 1px solid #a9aeb8;
  border-radius: 3px;
  background: linear-gradient(#dbe6f7, #fff 20%, #fdfdfe);
  color: #4b505a;
  font-size: 11px;
`;

const Group = styled.div`
  display: flex;
  flex: none;
  flex-direction: column;
  height: 85px;
  overflow: hidden;
  border: 1px solid #969ba5;
  border-radius: 3px;
  background: linear-gradient(#fafbfd, #fff 40%, #f4f5f8);
`;

const GroupBody = styled.div`
  display: flex;
  flex: 1;
  padding: 0 3px;
`;

const GroupName = styled.div`
  height: 16px;
  background: linear-gradient(#e0e3e9, #c6cad5);
  line-height: 15px;
  text-align: center;
  white-space: nowrap;
`;

const BigButton = styled.button`
  display: flex;
  flex: none;
  flex-direction: column;
  align-items: center;
  width: ${(p) => p.$w}px;
  padding-top: 3px;
  line-height: 13px;
  white-space: nowrap;
  svg {
    margin-bottom: 4px;
  }
`;

const LabelLine = styled.span`
  display: flex;
  align-items: center;
  justify-content: center;
  gap: 3px;
  height: 13px;
`;

const SmallCol = styled.div`
  display: flex;
  flex: none;
  flex-direction: column;
  align-items: ${(p) => (p.$text ? "flex-start" : "center")};
  gap: 6px;
  width: ${(p) => p.$w}px;
  padding-top: 3px;
`;

const SmallButton = styled.button`
  display: flex;
  align-items: center;
  gap: 6px;
  height: 16px;
  white-space: nowrap;
`;

const CheckLabel = styled.label`
  display: flex;
  align-items: center;
  gap: 6px;
  height: 16px;
  input {
    display: flex;
    align-items: center;
    justify-content: center;
    width: 13px;
    height: 13px;
    margin: 0 2px 0 1px;
    appearance: none;
    border: 1px solid #8a8f99;
    background: linear-gradient(135deg, #d4d8de, #fff);
  }
  input:checked::after {
    content: "";
    width: 4px;
    height: 8px;
    margin-bottom: 2px;
    border: solid #2a4a80;
    border-width: 0 2px 2px 0;
    transform: rotate(40deg);
  }
`;

const GroupSep = styled.span`
  flex: none;
  width: ${(p) => p.$w}px;
  height: 56px;
  margin-top: 6px;
  background: linear-gradient(#b9bdc6, #b9bdc6) center / 1px 100% no-repeat;
`;

// B: big button, S: column of small icons, D: small icons with arrows, |: separator
const groups = [
  {
    name: "Proje Ayarları",
    items: [
      ["B", 42, "gear", "Analiz", "Ayarları"],
      ["B", 44, "floorList", "Kat", "listesi ▾"],
      ["T", 115],
    ],
  },
  { name: "Aks", items: [["B", 42, "axisBig", "Aks", "▾"], ["S", 25, "arcDot arcC dotLine"]] },
  { name: "Duvar", items: [["B", 40, "wallBig", "Duvar", "▾"], ["S", 27, "wallV zig wave"]] },
  {
    name: "Betonarme",
    items: [
      ["B", 42, "columnBig", "Kolon", "▾"],
      ["S", 20, "cyl ell funnel"],
      ["|", 16],
      ["B", 38, "beamBig", "Kiriş", "▾"],
      ["S", 24, "tBeam wave quarter"],
      ["|", 14],
      ["B", 36, "perdeBig", "Perde", "▾"],
      ["|", 12],
      ["B", 44, "tableBig", "Döşeme", "▾"],
      ["S", 26, "slabCol slabIn slabL"],
      ["S", 26, "hatchA hatchB slabBlk"],
      ["S", 26, "tableS loadR slabR"],
      ["B", 46, "edgeBig", "Döşeme", "Kenarı ▾"],
      ["|", 6],
      ["B", 54, "stairBig", "Merdiven", "▾"],
    ],
  },
  {
    name: "Temel - Zemin",
    items: [
      ["B", 42, "footBig", "Sürekli", "Temel ▾"],
      ["D", 36, "foot piles pads"],
      ["|", 8],
      ["S", 22, "lWall wedge"],
      ["|", 12],
      ["B", 42, "radyeBig", "Radye", "▾"],
      ["S", 20, "slabCol slabIn slabL"],
      ["B", 50, "radyeEdge", "Radye", "Kenarı ▾"],
    ],
  },
  { name: "İskele Ayarları", items: [["B", 68, "scaffold", "İskele", "Makrosu ▾"]] },
  { name: "Tasarım", items: [["B", 58, "calcA", "Betonarme", "▾"], ["B", 43, "calcB", "Çelik", "▾"]] },
  {
    name: "Raporlar",
    items: [
      ["B", 46, "reports", "Seçmeli", "Raporlar"],
      ["S", 24, "redDocA redDocB redDoc"],
      ["|", 8],
      ["B", 58, "colReport", "Betonarme", "▾"],
      ["B", 43, "steelReport", "Çelik", "▾"],
    ],
  },
  { name: "Çizim Oluştur", items: [["B", 58, "drawA", "Betonarme", "▾"], ["B", 43, "drawB", "Çelik", "▾"]] },
  {
    name: "Analiz ve Tasarım Görüntüleme",
    items: [
      ["B", 42, "solid", "Katı", "Model"],
      ["B", 42, "model", "Analiz", "Modeli"],
      ["|", 8],
      ["B", 42, "duvarM", "Duvar", "▾"],
      ["|", 6],
      ["B", 46, "modalM", "Modal", "▾"],
      ["B", 44, "moment", "Moment", "3-3 ▾"],
    ],
  },
  { name: "Analiz", items: [["B", 54, "boltBig", "Analiz", "Tasarım ▾"]] },
];

function RibbonItem({ item }) {
  const [kind, width, art, line1, line2] = item;
  const [semiRigid, setSemiRigid] = useState(true);

  if (kind === "|") return <GroupSep $w={width} />;
  if (kind === "B") {
    const text = line2.replace("▾", "").trim();
    return (
      <BigButton type="button" $w={width}>
        <Glyph name={art} big />
        <LabelLine>{line1}</LabelLine>
        <LabelLine>
          {text}
          {line2.includes("▾") && <Arrow />}
        </LabelLine>
      </BigButton>
    );
  }
  if (kind === "T") {
    return (
      <SmallCol $w={width} $text>
        <SmallButton type="button">
          <Glyph name="floors" />
          Kat Genel Ayarları
        </SmallButton>
        <SmallButton type="button">
          <Glyph name="floorCopy" />
          Kat Kopyala
        </SmallButton>
        <CheckLabel>
          <input type="checkbox" checked={semiRigid} onChange={(e) => setSemiRigid(e.target.checked)} />
          Yarı Rijit
        </CheckLabel>
      </SmallCol>
    );
  }
  return (
    <SmallCol $w={width}>
      {art.split(" ").map((name) => (
        <SmallButton type="button" key={name} aria-label={name}>
          <Glyph name={name} />
          {kind === "D" && <Arrow />}
        </SmallButton>
      ))}
    </SmallCol>
  );
}

/* ---------- toolbar strips ---------- */

const ToolRow = styled.div`
  display: flex;
  flex: none;
  gap: 2px;
  height: 25px;
  margin-top: 2px;
`;

const Strip = styled.div`
  display: flex;
  align-items: center;
  height: 25px;
  padding-left: 3px;
  border-radius: 3px;
  background: linear-gradient(#f0f3fa, #dfe3ec 60%, #c6cbd6);
`;

const Grip = styled.span`
  flex: none;
  width: 6px;
  height: 12px;
  background: repeating-linear-gradient(#a4a9b4 0 2px, transparent 2px 4px) 1px 0 / 2px 100% no-repeat;
`;

const StripEnd = styled.span`
  display: flex;
  align-items: flex-end;
  justify-content: center;
  align-self: stretch;
  width: 11px;
  margin-left: 3px;
  padding-bottom: 4px;
  border-radius: 0 4px 4px 0;
  background: linear-gradient(#bcc1cb, #a3a9b5);
  i {
    border-top-color: #fff;
  }
`;

/* ---------- docks ---------- */

const DockColumn = styled.aside`
  display: flex;
  flex: none;
  flex-direction: column;
  width: ${(p) => p.$w || 26}px;
  padding: ${(p) => p.$top || 0}px 1px 0 0;
`;

const Dock = styled.div`
  display: flex;
  flex-direction: column;
  align-items: center;
  border-radius: 3px;
  background: linear-gradient(90deg, #f0f3fa, #e3e7f0 50%, #cbd0da);
`;

const DockGrip = styled.span`
  width: 15px;
  height: 10px;
  background: repeating-linear-gradient(90deg, #a4a9b4 0 2px, transparent 2px 4px) 0 4px / 100% 2px no-repeat;
`;

const DockSep = styled.span`
  width: 14px;
  height: 8px;
  background: linear-gradient(#9aa0ab 50%, #fff 50%) 0 3px / 100% 2px no-repeat;
`;

const DockEnd = styled.span`
  display: flex;
  align-items: center;
  justify-content: flex-end;
  align-self: stretch;
  height: 12px;
  padding-right: 3px;
  border-radius: 0 0 4px 4px;
  background: #b0b5c0;
`;

const leftTools =
  "props | selA selB selC selD selE | qArrow | list | heightR copy paste copyA copyB copyC ringC | beamCut colBar plane beamLn bracket | render | autoAbc | binoc";
const right1 =
  "table nodeB panelB colB shoulderB slabB meshB tableF footB padB capB cross wedgeB boxB stairB pilesB domeB trussP sheetG levelG n123";
const right2 =
  "checkC gridCalc linesC meshC | beamC columnC funnelC tiltC portalC | footC padC capC cornC | wedgeC wallC stepsC pilesC domeC | redPoly tileC";
const right2b = "bladeG beamG plateG boltG boltG2 weldG ibG meshG padG trussG starG lineG hatG hammerG";
const right3 =
  "multiDoc | checkDoc checkDoc checkDoc blueDoc rainbow | beamDoc linesDoc meshDoc colDoc tubeDoc boxDoc footDoc footDoc capDoc blueDoc blueDoc pilesDoc | stairDocR domeDocR wedgeDoc wallDoc | redDocA redDocB barsDoc | axesDoc | redDoc crossDoc";
const right3b =
  "rulerDoc arrowsDoc discDoc bladeDoc bandDoc redColsDoc blueColsDoc vDoc gateDocA gateDocB";

const ToolDock = ({ tools }) => (
  <Dock>
    <DockGrip />
    {tools.split(" ").map((name, i) =>
      name === "|" ? (
        <DockSep key={i} />
      ) : (
        <IconButton key={i} type="button" aria-label={name} $h={21}>
          <Glyph name={name} />
        </IconButton>
      )
    )}
    <DockEnd>
      <svg width="7" height="7" aria-hidden="true">
        <path d="M.5 0v7M2.500 0v7l4-3.500z" fill="#fff" stroke="#fff" />
      </svg>
    </DockEnd>
  </Dock>
);

/* ---------- tree ---------- */

const TreePanel = styled.section`
  display: flex;
  flex: none;
  flex-direction: column;
  width: 370px;
  margin-right: 4px;
  border-right: 1px solid #9aa0ab;
`;

const PanelHead = styled.div`
  display: flex;
  flex: none;
  align-items: center;
  height: 21px;
  padding: 0 2px 0 4px;
  border-bottom: 2px solid #8c9098;
  background: #b9bfca;
  color: #444a55;
  span {
    flex: 1;
  }
  button {
    width: 16px;
    height: 16px;
  }
`;

const TreeBody = styled.div`
  display: flex;
  flex: 1;
  min-height: 0;
  overflow: hidden;
  border-left: 2px solid #8c9098;
  background: #fff;
`;

const TreeList = styled.ul`
  flex: 1;
  padding: 1px 0 0 2px;
`;

const TreeRow = styled.li`
  display: flex;
  align-items: center;
  height: 18px;
  white-space: nowrap;
`;

const dotsV = "repeating-linear-gradient(#888 0 1px, #fff 1px 2px)";
const dotsH = "repeating-linear-gradient(90deg, #888 0 1px, #fff 1px 2px)";

const Guide = styled.span`
  display: flex;
  flex: none;
  align-items: center;
  justify-content: center;
  width: 19px;
  height: 18px;
  ${(p) => p.$kind === "line" && css`background: ${dotsV} 9px 0 / 1px 100% no-repeat;`}
  ${(p) => p.$kind === "tee" && css`background: ${dotsV} 9px 0 / 1px 100% no-repeat, ${dotsH} 9px 9px / 10px 1px no-repeat;`}
  ${(p) => p.$kind === "ell" && css`background: ${dotsV} 9px 0 / 1px 9px no-repeat, ${dotsH} 9px 9px / 10px 1px no-repeat;`}
`;

const Expander = styled.button`
  width: 9px;
  height: 9px;
  border: 1px solid #919191;
  background:
    linear-gradient(#2b4a9a, #2b4a9a) center / 5px 1px no-repeat,
    ${(p) => (p.$open ? "" : "linear-gradient(#2b4a9a, #2b4a9a) center / 1px 5px no-repeat,")}
    #fff;
`;

const TreeIcon = styled.span`
  display: flex;
  flex: none;
  justify-content: center;
  width: 18px;
  margin-right: 3px;
`;

const Scroll = styled.div`
  display: flex;
  flex-direction: column;
  align-items: center;
  width: 17px;
  background: #f0f0f0;
`;

const Thumb = styled.span`
  flex: 491;
  width: 2px;
  background: #868686;
`;

const Gap = styled.span`
  flex: ${(p) => p.$n};
`;

// depth, expander, icon, label
const rows = [
  [2, "+", "folderD", "Diyaframlar"],
  [1, "-", "frameF", "Analiz"],
  [2, "+", "folderS", "Statik Analiz"],
  [2, "-", "folderM", "Modal Analiz"],
  [3, "-", "modal", "Modal Analiz"],
  [4, "", "modal", "Modal E1"],
  [4, "", "modal", "Modal E2"],
  [4, "", "modal", "Modal E3"],
  [4, "", "modal", "Modal E4"],
  [4, "", "modal", "Modal'"],
  [2, "-", "folderT", "Tasarım Spektrumu Analizi"],
  [3, "-", "spRed", "Tasarım Spektrumu"],
  [4, "", "spDsf", "DSF1"],
  [3, "-", "spBlue", "Tasarım Spektrumu Durumları"],
  [4, "", "spBlue", "Ex"],
  [4, "", "spBlue", "Ey"],
  [4, "", "spBlue", "Ex'"],
  [4, "", "spBlue", "Ey'"],
  [2, "-", "folderZ", "Zaman Tanım Alanı Analizi"],
  [3, "", "zRed", "Zaman Tanım Alanı Fonksiyonları"],
  [3, "", "zBlue", "Zaman Tanım Alanı Durumları"],
  [2, "", "folderN", "Nonlineer İtme Analizi"],
  [2, "", "folderE", "Euler Burkulma Analizi"],
  [2, "+", "folderY", "Yükleme Kombinasyonları"],
  [1, "-", "stack", "Çizimler"],
  [2, "", "sheet", "1. KAT"],
  [2, "-", "sheet", "ZEMİN KAT"],
  [3, "", "draw", "Görünüş G1 / G1 GÖRÜNÜŞÜ"],
  [3, "", "draw", "Kesit 1 / 1-1 KESİTİ"],
  [3, "", "draw", "ZEMİN KAT Kalıp Planı"],
  [3, "", "draw", "ZEMİN KAT Kolon Aplikasyon Planı"],
  [3, "", "draw", "ZEMİN KAT Kalıp Planı (1)"],
  [3, "", "draw", "ZEMİN KAT-Kiriş Açılımları-1. Pafta"],
  [3, "", "draw", "ZEMİN KAT-Kiriş Açılımları-2. Pafta"],
  [2, "-", "stack", "Betonarme Çizimleri"],
  [3, "", "draw", "TÜM PROJE-Kolon Düşey Açılımları-1. Pafta"],
  [2, "", "stack", "Çelik Çizimleri"],
  [2, "", "stack", "Diğer Çizimler"],
  [0, "-", "folder", "Sonuç"],
  [1, "", "small", "Proje Hataları"],
  [1, "", "small", "Yapı Özet Bilgileri"],
  [1, "+", "small", "Açıklama Bilgileri"],
  [1, "+", "small", "Yapı Kat ve Yük Bilgileri"],
  [1, "+", "small", "Dinamik Analiz"],
  [1, "+", "small", "Yapı Düzensizlikleri"],
  [1, "+", "small", "Döşemeler"],
  [1, "+", "small", "Kirişler"],
  [1, "+", "small", "Kolonlar"],
];

// does the branch at this level go on below the row?
const goesOn = (index, level) => {
  const next = rows.slice(index + 1).find((r) => r[0] <= level);
  return next ? next[0] === level : level === 1;
};

function Tree() {
  return (
    <TreeList>
      {rows.map(([depth, mark, icon, label], i) => (
        <TreeRow key={i}>
          {Array.from({ length: depth }, (_, level) => (
            <Guide key={level} $kind={goesOn(i, level) ? "line" : ""} />
          ))}
          <Guide $kind={goesOn(i, depth) ? "tee" : "ell"}>
            {mark && <Expander type="button" aria-label={label} $open={mark === "-"} />}
          </Guide>
          <TreeIcon>
            <Glyph name={icon} />
          </TreeIcon>
          {label}
        </TreeRow>
      ))}
    </TreeList>
  );
}

/* ---------- 3D view ---------- */

const View = styled.main`
  position: relative;
  flex: 1;
  min-height: 0;
  overflow: hidden;
  border: 1px solid #9aa0ab;
  border-width: 1px 1px 2px 1px;
  background: #fff;
`;

const Scene = styled.svg`
  display: block;
  width: 100%;
  height: 100%;
  font-family: "Open Sans", "Noto Sans", sans-serif;
`;

const ViewName = styled.span`
  position: absolute;
  top: 4px;
  left: 4px;
  color: #f00;
`;

const ViewButtons = styled.div`
  position: absolute;
  top: 0;
  right: 1px;
  display: flex;
  button {
    display: flex;
    align-items: center;
    justify-content: center;
    width: 18px;
    height: 16px;
    border: 2px solid #222;
    background: #ccc;
  }
`;

const gridLines = [
  "M401 565L801 483M1450 521L1842 624",
  "M836 617L701 664M877 671L736 731M956 754L795 844M1080 884L949 993M1103 886L1208 993",
  "M752 645L990 993M768 640L812 699 882 795 998 952 1028 993M784 634L829 692 902 784 1021 933 1068 993",
  "M798 577L836 617M807 591l21-7M812 595l18-5M816 600l15-5",
  "M1470 563L1429 596M1437 568L1629 628M1436 573L1625 634M1434 578L1623 639",
  "M1429 597L1795 724M1408 626L1793 775M1322 701L1526 807 1783 941M1270 743L1300 761 1489 875",
  "M1633 613L1526 807 1424 993M1665 679L1543 993M1685 686L1627 860 1585 993M1707 693L1626 993",
  "M791 648l6-2M819 683l6-2M841 711l6-2M878 759l8-3M808 700l7-3M878 796l8-3M994 952l9 0M750 646l5-2M765 641l6-2M781 635l6-2",
  "M1624 761l9 5M1612 791l10 5M1566 905l12 9M1484 874l10 5M1624 860l7 3M1661 678l7 3M1682 684l7 4M1703 691l7 4M1625 627l6 2M1621 633l6 2M1619 638l6 2",
];

const inWindows = "M847 578l17-5M849 583l17-5M850 589l16-5M1380 556l14 4M1378 561l14 4M1385 552l9 3M1412 561l6 2M1411 566l6 2M1410 571l6 1";

// center x, center y, rx, ry, angle, text, text size
const bubbles = [
  [691, 667, 10, 4, -14, "A", 9],
  [725, 736, 12, 6, -16, "B", 13],
  [782, 851, 14, 9, -28, "C", 19],
  [795, 575, 7, 3, -8, "1", 6],
  [1471, 561, 7, 3, 8, "1", 6],
  [1635, 610, 9, 4, 12, "E", 7],
  [1809, 729, 14, 5, 18, "4", 11],
  [1807, 781, 16, 7, 20, "3", 14],
  [1802, 951, 22, 11, 32, "2", 24],
];

// center x, center y, angle, size, text
const dims = [
  [794, 639, 52, 9, "75"],
  [813, 662, 52, 11, "180"],
  [794, 665, 54, 11, "300"],
  [839, 693, 52, 11, "127"],
  [869, 731, 51, 14, "180"],
  [850, 739, 53, 14, "345"],
  [883, 823, 55, 17, "1400"],
  [940, 858, 53, 19, "355"],
  [1021, 917, 50, 22, "838"],
  [1507, 599, 18, 8, "437"],
  [1532, 602, 18, 8, "400"],
  [1362, 794, 30, 18, "400"],
  [1641, 714, -66, 11, "365"],
  [1672, 703, -70, 10, "190"],
  [1617, 775, -66, 13, "100"],
  [1644, 782, -70, 14, "420"],
  [1589, 842, -66, 18, "295"],
  [1648, 868, -68, 18, "1210"],
  [1532, 975, -66, 22, "300"],
];

const saw = Array.from({ length: 20 }, (_, i) => `L${1346 + i * 8} ${358 + Math.round(i * 0.8)}l5 1l0 -2l3 0`).join("");

function Drawing() {
  return (
    <Scene viewBox="401 170 1441 822" preserveAspectRatio="xMidYMid slice" role="img" aria-label="Perspektif">
      <g fill="none" stroke={PURPLE} strokeWidth="1">
        {gridLines.map((d) => (
          <path key={d} d={d} />
        ))}
        {bubbles.map(([x, y, rx, ry, a]) => (
          <ellipse key={`${x}-${y}`} cx={x} cy={y} rx={rx} ry={ry} transform={`rotate(${a} ${x} ${y})`} />
        ))}
      </g>
      <path
        fill="#ff8585"
        d="M728 614L793 595l-1-3l19 0l-12 8l-2-3L745 615L758 636l7-3l-7 11l-18-2l5-2z"
      />
      <path stroke="#fff" fill="none" d="M795 595l10 2M800 593l-1 5M750 637l8 4M757 637l-8 5" />
      <g fill={PURPLE}>
        <path
          d={`M771 370L1126 337L1199 344L1240 339L1346 349v8${saw}L1509 373v6l-9 1v3l-7 1v3l-6 0v4h-7L1462 458L1467 459L1424 612L1300 718L1092 896L841 633z`}
        />
        <path d="M795 899L840 993H641z" />
      </g>
      <g fill="#fff">
        <path d="M1350 437L1353 426l15 2l1-7l13 2l2-7l13 1l1-6l13 2l1-6l12 1l2-5l11 1l2-5h1L1428 451z" />
        <path d="M1450 396l9 1l1-5l9 1l2-4h1L1454 457l-17-4z" />
        <path d="M840 548l23 19 9 36-17 6zM890 588l7 6-5 2zM1395 548l-37 23 29 10zM1427 527l-5 2-15 60 4 1zM1339 430l2 0-1 5-2 0z" />
      </g>
      <path d={inWindows} stroke={PURPLE} fill="none" />
      <g fill={PURPLE} textAnchor="middle" dominantBaseline="central">
        {bubbles.map(([x, y, , , a, text, size]) => (
          <text key={`${x}-${y}`} x={x} y={y} fontSize={size} transform={`rotate(${a} ${x} ${y})`}>
            {text}
          </text>
        ))}
        {dims.map(([x, y, a, size, text]) => (
          <text key={`${x}-${y}`} x={x} y={y} fontSize={size} transform={`rotate(${a} ${x} ${y})`}>
            {text}
          </text>
        ))}
      </g>
      <path d="M1678 319.500h23M1689.500 308v23" stroke="#000" fill="none" />
    </Scene>
  );
}

/* ---------- lower parts ---------- */

const Body = styled.div`
  display: flex;
  flex: 1;
  min-height: 0;
`;

const Center = styled.div`
  display: flex;
  flex: 1;
  flex-direction: column;
  min-width: 0;
`;

const Work = styled.div`
  display: flex;
  flex: 1;
  min-height: 0;
`;

const ViewColumn = styled.div`
  display: flex;
  flex: 1;
  flex-direction: column;
  min-width: 0;
`;

const Log = styled.div`
  flex: none;
  height: 60px;
  margin-top: 4px;
  padding-top: 1px;
  background: #f0f0f0;
  color: #000;
  font-size: 10px;
  line-height: 13px;
`;

const StatusBar = styled.footer`
  display: flex;
  flex: none;
  height: 18px;
  border-top: 1px solid #8c919c;
  background: linear-gradient(#e2e5ea, #a9afbb 30%, #b6bbc6);
  color: #333;
  font-size: 11px;
  line-height: 18px;
`;

const StatusCell = styled.span`
  width: ${(p) => (p.$w ? `${p.$w}px` : "auto")};
  flex: ${(p) => (p.$w ? "none" : 1)};
  padding-left: 6px;
  border-right: 1px solid #7d828d;
`;

const tabs = [
  "Betonarme",
  "Çelik",
  "Birleşim",
  "Objeler",
  "Değiştir",
  "Araçlar",
  "Ayarlar",
  "Görüntü",
  "Analiz ve Tasarım",
  "Analiz ve Tasarım Görüntüleme",
  "Raporlar",
  "Çizimler",
];

function App() {
  const [tab, setTab] = useState("Betonarme");

  return (
    <Window>
      <GlobalStyle />
      <TitleBar>
        <Logo>
          ide<b>CAD</b>
        </Logo>
        <QuickBar>
          {renderIcons(
            "home page open save saveAll undo redo undoBox | brick move2 perp parallel corner | gridLock polyLock starLock cutR tee | updn bolt",
            ["brick", "starLock", "updn"]
          )}
          <Arrow $gap={2} />
        </QuickBar>
        <QuickMore>
          <Arrow as="div" />
        </QuickMore>
        <Title>ideCAD Statik - Çelik Çizimleri Oluşturun.cde - MİMARİ ŞABLON PROJE - [ZEMİN KAT TAVANI,  3.00 KOTU]</Title>
        <WinButton type="button" aria-label="Küçült">
          <svg width="10" height="10" fill="none" stroke="#888">
            <path d="M0 5.500h10" />
          </svg>
        </WinButton>
        <WinButton type="button" aria-label="Geri yükle">
          <svg width="10" height="10" fill="none" stroke="#888">
            <path d="M.5 2.500h7v7h-7zM2.500 .5h7v7" />
          </svg>
        </WinButton>
        <WinButton type="button" aria-label="Kapat">
          <svg width="10" height="10" fill="none" stroke="#888">
            <path d="M0 0l10 10M10 0L0 10" />
          </svg>
        </WinButton>
      </TitleBar>

      <TabRow>
        {tabs.map((name) => (
          <Tab key={name} type="button" $on={name === tab} onClick={() => setTab(name)}>
            {name}
          </Tab>
        ))}
        <Spacer />
        <SearchBox>
          <svg viewBox="0 0 14 17" fill="none" stroke="#888">
            <path d="M7 3.500a4 4 0 1 0 .1 0M10 11l3 3" />
          </svg>
          <input type="text" placeholder="Herhangi bir komut ara..." aria-label="Komut ara" />
          <Arrow />
        </SearchBox>
        {renderIcons("layers layers2")}
        <StyleBox>
          <svg width="26" height="14" viewBox="0 0 26 14" fill="none" stroke="#000">
            <path d="M1.500 2.500h9v9h-9zM2 3l8 8M10 3L2 11" strokeWidth="2" />
            <path d="M14.500 6.500h7v5h-7zM20.500 6V2.500h3V5" />
          </svg>
          <select aria-label="Stil" defaultValue="Standart">
            <option>Standart</option>
          </select>
          <Arrow />
        </StyleBox>
        <RowText type="button">Görünüm</RowText>
        <Arrow $gap={3} />
        {renderIcons("wrench | help")}
        <Arrow $gap={3} />
        <MdiButton type="button" aria-label="Pencereyi küçült">
          <svg width="9" height="9" stroke="#666" strokeWidth="2">
            <path d="M1 7h7" />
          </svg>
        </MdiButton>
        <MdiButton type="button" aria-label="Pencereyi geri yükle">
          <svg width="10" height="9" fill="none" stroke="#666">
            <path d="M.5 3.500h7v4h-7zM2 1.500h7v4" />
          </svg>
        </MdiButton>
        <MdiButton type="button" aria-label="Pencereyi kapat">
          <svg width="9" height="9" stroke="#666" strokeWidth="2">
            <path d="M1 1l7 7M8 1L1 8" />
          </svg>
        </MdiButton>
      </TabRow>

      <Ribbon>
        {groups.map((group) => (
          <Group key={group.name}>
            <GroupBody>
              {group.items.map((item, i) => (
                <RibbonItem key={i} item={item} />
              ))}
            </GroupBody>
            <GroupName>{group.name}</GroupName>
          </Group>
        ))}
      </Ribbon>

      <ToolRow>
        <Strip>
          <Grip />
          {renderIcons(
            "zoomBox zoomSel | hatchPen pipette note | compassA arcCut | move moveCopy rotate axisStar mirror alignC starMove | trimA trimB offset steps12 breakA breakB extend filletA filletB nodes wand | dimRow book grid | image letterA poly arc circle cloud hatch spline plus21 qArrow m2 angleQ mm2 | levels eye | sheetA sheetB | ucs ucsBrush | xy zz threeP target"
          )}
          <StripEnd>
            <Arrow as="i" />
          </StripEnd>
        </Strip>
        <Strip>
          <Grip />
          {renderIcons("col3d stairY domeY coneY wallY tagY curveR curveP curveQ peaks bolt | frameR frame", ["frameR"])}
          <StripEnd>
            <Arrow as="i" />
          </StripEnd>
        </Strip>
      </ToolRow>

      <Body>
        <DockColumn $top={2} $w={25}>
          <ToolDock tools={leftTools} />
        </DockColumn>
        <Center>
          <Work>
            <TreePanel>
              <PanelHead>
                <span>Yapı Ağacı</span>
                <button type="button" aria-label="Sabitle">
                  <svg width="10" height="10" fill="none" stroke="#666">
                    <path d="M2.500 5.500V.5h5v5M1 5.500h8M5 6v4" />
                  </svg>
                </button>
                <button type="button" aria-label="Paneli kapat">
                  <svg width="9" height="9" stroke="#666">
                    <path d="M1 1l7 7M8 1L1 8" />
                  </svg>
                </button>
              </PanelHead>
              <TreeBody>
                <Tree />
                <Scroll>
                  <Gap $n={192} />
                  <Thumb />
                  <Gap $n={181} />
                </Scroll>
              </TreeBody>
            </TreePanel>
            <ViewColumn>
              <View>
                <Drawing />
                <ViewName>Perspektif</ViewName>
                <ViewButtons>
                  {["M1 1h10L7 6v5L5 9V6z", "M2 11V1l8 10V1", "M1 1l5 10 5-10"].map((d) => (
                    <button type="button" key={d} aria-label="Görünüş">
                      <svg width="12" height="12" fill="none" stroke="#111">
                        <path d={d} />
                      </svg>
                    </button>
                  ))}
                </ViewButtons>
              </View>
              <Log>
                *İptal*
                <br />
                Komut :
                <br />
                *İptal*
                <br />
                Komut : e
              </Log>
            </ViewColumn>
          </Work>
          <StatusBar>
            <StatusCell $w={258}>BOŞ</StatusCell>
            <StatusCell>(Seçilenler : 452)</StatusCell>
            <StatusCell $w={80}>tf / cm</StatusCell>
            <StatusCell $w={75}>1 : 50</StatusCell>
            <StatusCell $w={74}>% 58</StatusCell>
          </StatusBar>
        </Center>
        <DockColumn $top={2}>
          <ToolDock tools={right1} />
        </DockColumn>
        <DockColumn>
          <ToolDock tools={right2} />
          <ToolDock tools={right2b} />
        </DockColumn>
        <DockColumn $w={25}>
          <ToolDock tools={right3} />
          <ToolDock tools={right3b} />
        </DockColumn>
      </Body>
    </Window>
  );
}

export default App;
